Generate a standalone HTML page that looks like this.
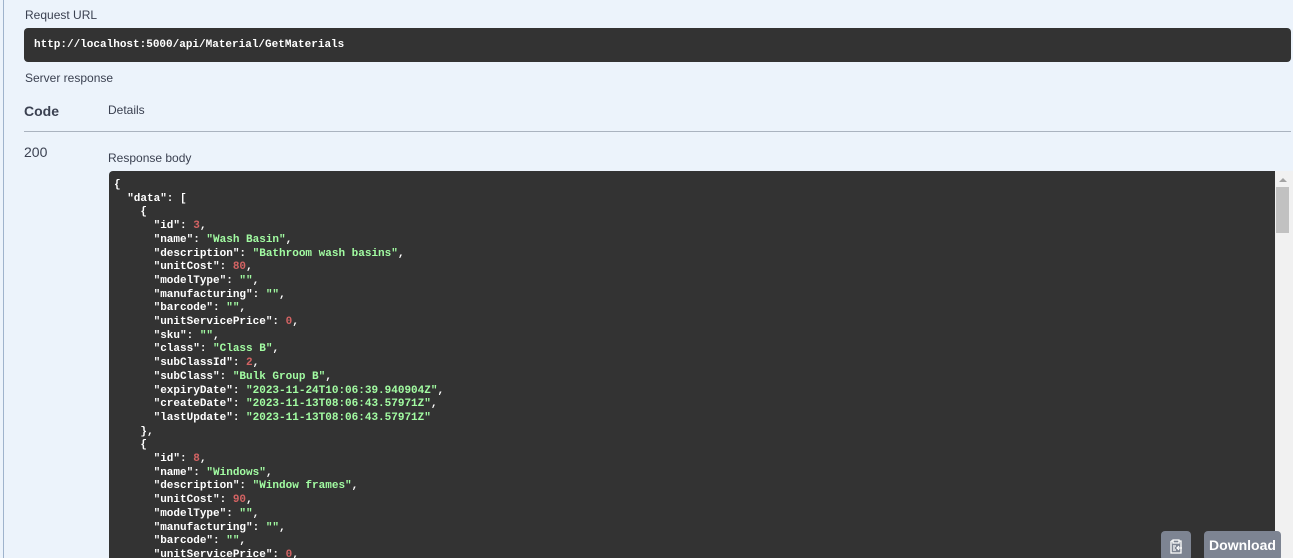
<!DOCTYPE html>
<html><head><style>
html,body{margin:0;width:1293px;height:558px;overflow:hidden}
body{background:#ecf3fb;font-family:"Liberation Sans",Arial,sans-serif;position:relative;color:#3b4151}
.vl{position:absolute;left:3px;top:0;width:1px;height:558px;background:#9fb3cc}
.t{position:absolute;font-size:12px;font-weight:bold;color:#3b4151}
.url{position:absolute;left:24px;top:28px;width:1267px;height:34px;background:#333;border-radius:4px;color:#fff;font:bold 11px "Liberation Mono",monospace;line-height:34px;padding-left:10px;box-sizing:border-box}
.hr{position:absolute;left:24px;top:131px;width:1267px;height:1px;background:#aab3bf}
.code{position:absolute;left:109px;top:171px;width:1166px;height:387px;background:#333;border-radius:4px 0 0 0;overflow:hidden}
pre{margin:0;position:absolute;left:5px;top:8px;font:bold 11px/13.7px "Liberation Mono",monospace;color:#fff}
.n{color:#d36363}.s{color:#a2fca2}
.sb{position:absolute;left:1275px;top:171px;width:18px;height:387px;background:#f1f1f1}
.th{position:absolute;left:1276px;top:187px;width:13px;height:46px;background:#c1c1c1}
.btn{position:absolute;top:531px;height:30px;background:#7d8492;border-radius:4px;color:#fff;font-weight:bold;font-size:14px}
</style></head><body>
<div class="vl"></div>
<div class="t" style="left:25px;top:8px;font-weight:normal;font-size:12px">Request URL</div>
<div class="url">http://localhost:5000/api/Material/GetMaterials</div>
<div class="t" style="left:25px;top:71px;font-weight:normal">Server response</div>
<div class="t" style="left:24px;top:103px;font-size:14px">Code</div>
<div class="t" style="left:108px;top:103px;font-weight:normal">Details</div>
<div class="hr"></div>
<div class="t" style="left:24px;top:144px;font-weight:normal;font-size:14px">200</div>
<div class="t" style="left:108px;top:151px;font-weight:normal">Response body</div>
<div class="code"><pre>{
  "data": [
    {
      "id": <span class="n">3</span>,
      "name": <span class="s">"Wash Basin"</span>,
      "description": <span class="s">"Bathroom wash basins"</span>,
      "unitCost": <span class="n">80</span>,
      "modelType": <span class="s">""</span>,
      "manufacturing": <span class="s">""</span>,
      "barcode": <span class="s">""</span>,
      "unitServicePrice": <span class="n">0</span>,
      "sku": <span class="s">""</span>,
      "class": <span class="s">"Class B"</span>,
      "subClassId": <span class="n">2</span>,
      "subClass": <span class="s">"Bulk Group B"</span>,
      "expiryDate": <span class="s">"2023-11-24T10:06:39.940904Z"</span>,
      "createDate": <span class="s">"2023-11-13T08:06:43.57971Z"</span>,
      "lastUpdate": <span class="s">"2023-11-13T08:06:43.57971Z"</span>
    },
    {
      "id": <span class="n">8</span>,
      "name": <span class="s">"Windows"</span>,
      "description": <span class="s">"Window frames"</span>,
      "unitCost": <span class="n">90</span>,
      "modelType": <span class="s">""</span>,
      "manufacturing": <span class="s">""</span>,
      "barcode": <span class="s">""</span>,
      "unitServicePrice": <span class="n">0</span>,
</pre></div>
<div class="sb"></div><div class="th"></div>
<div style="position:absolute;left:1279px;top:178px;width:0;height:0;border:4px solid transparent;border-bottom:4px solid #a3a3a3;border-top:0"></div>
<div class="btn" style="left:1161px;width:30px;text-align:center;line-height:30px">
<svg width="14" height="16" viewBox="0 0 14 16" style="margin-top:7px"><path d="M4 2h6v3H4z M2 3h2 M10 3h2v12H2V3" fill="none" stroke="#fff" stroke-width="1.3"/><path d="M4 8h3M4 10h2M4 12h3M13 10H8M10 8l-2 2 2 2" stroke="#fff" stroke-width="1.2" fill="none"/></svg></div>
<div class="btn" style="left:1204px;width:77px;text-align:center;line-height:28px">Download</div>
</body></html>
